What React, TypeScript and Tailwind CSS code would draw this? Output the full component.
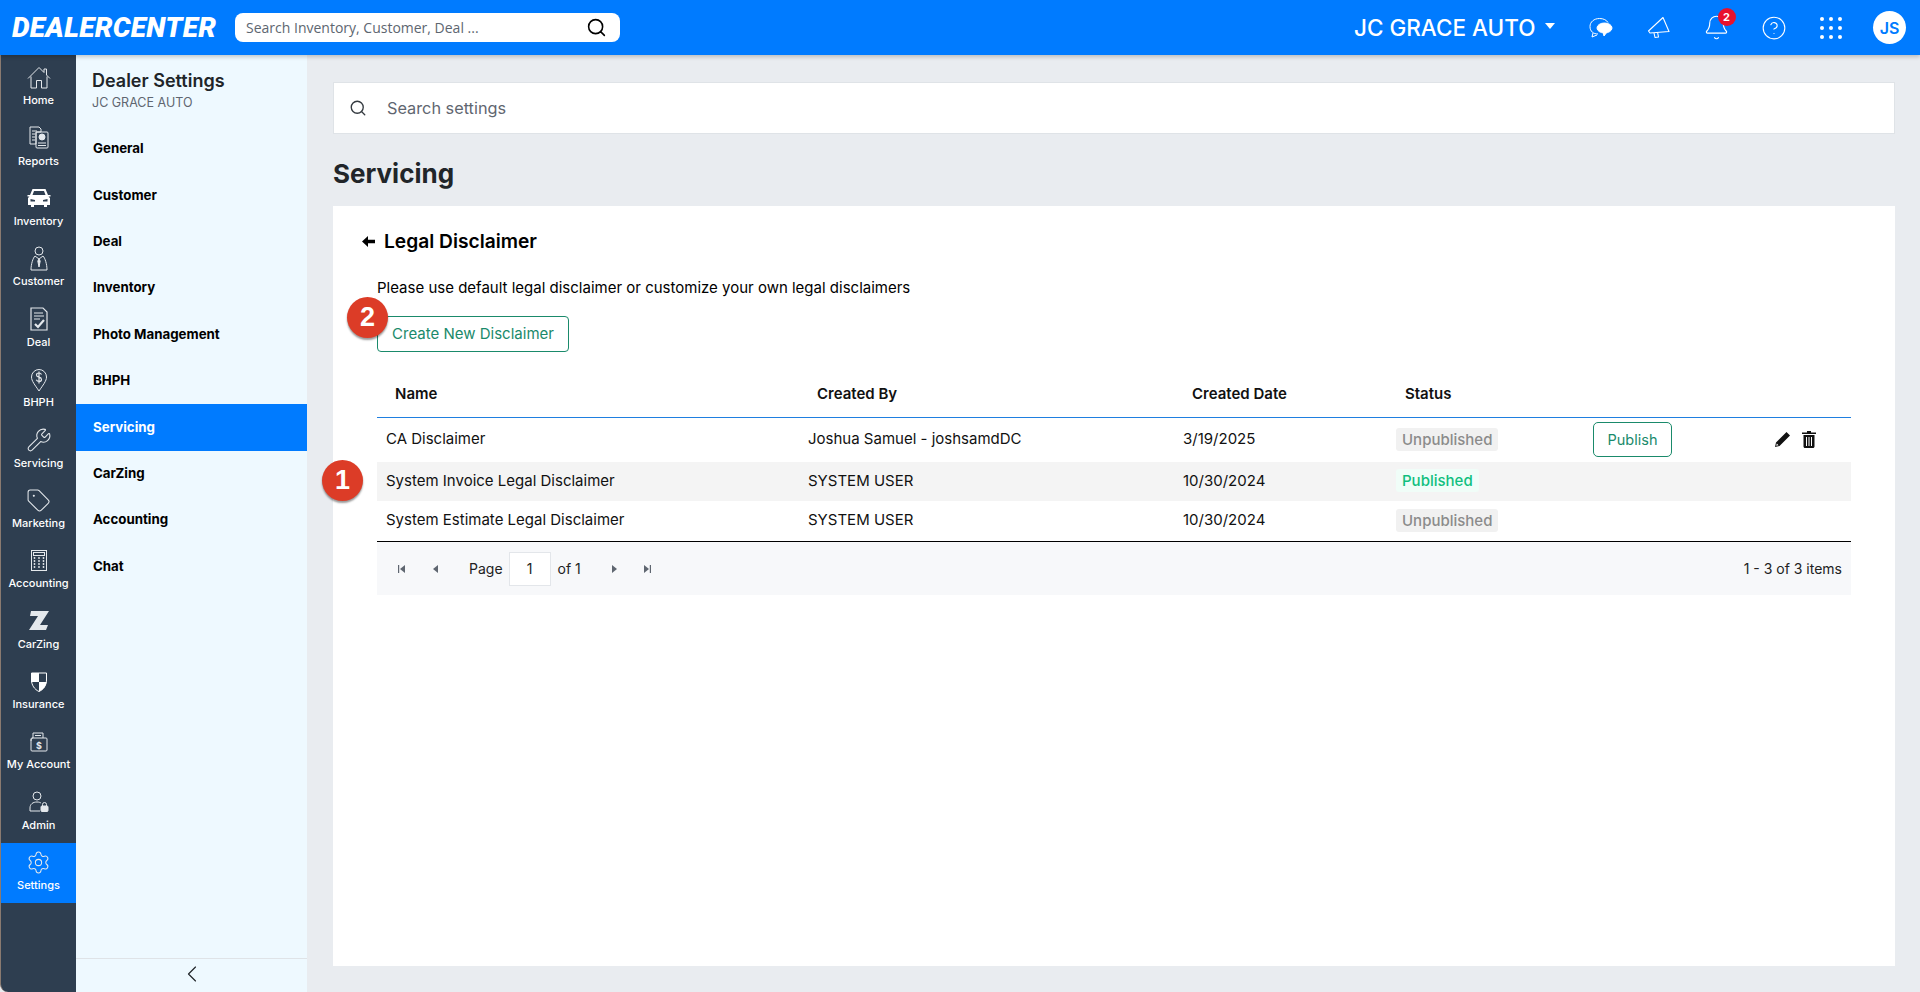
import React from "react";
import { Wrench, Tag, Settings, Bell, CircleHelp, Search, ChevronLeft } from "lucide-react";

const font = "font-['Inter','Liberation_Sans',sans-serif]";

const HomeIcon = () => (
    <svg width="24" height="24" viewBox="0 0 24 24" fill="none" stroke="currentColor" strokeWidth="1">
        <path d="M1 12.500L12 1.500l5 5V3h2.500v6L23 12.500" />
        <path d="M4 10.500V22h5.500v-7.500h5V22H20V10.500" />
    </svg>
);

const ReportsIcon = () => (
    <svg width="22" height="24" viewBox="0 0 22 24" fill="none" stroke="currentColor" strokeWidth="1">
        <path d="M2 1h9l2 2v3H8v12H2z" />
        <path d="M4 5h5M4 8h3M4 11h3M4 14h3" />
        <rect x="8" y="6" width="12" height="16" rx="1" />
        <circle cx="14" cy="11" r="3" fill="currentColor" />
        <path d="M10 17h8M10 19.500h8" />
    </svg>
);

const CarIcon = () => (
    <svg width="24" height="20" viewBox="0 0 24 20" fill="#ffffff">
        <path d="M5.500 1h13l2.500 6h2.500v1.500H21.500L23 10v7h-3v2h-3v-2H7v2H4v-2H1v-7l1.500-1.500H.5V7H3zM7 3L5.500 7h13L17 3zM3.500 11v2.500H8V12zM20.500 11L16 12v1.500h4.500z" fillRule="evenodd" />
    </svg>
);

const CustomerIcon = () => (
    <svg width="20" height="26" viewBox="0 0 20 26" fill="none" stroke="currentColor" strokeWidth="1">
        <circle cx="10" cy="5" r="4" />
        <path d="M6 10c-2 2-4 8-4 14h16c0-6-2-12-4-14l-4 3z" />
        <path d="M10 13l-1.200 2 1.200 6 1.200-6z" fill="currentColor" />
    </svg>
);

const DealIcon = () => (
    <svg width="18" height="24" viewBox="0 0 18 24" fill="none" stroke="currentColor" strokeWidth="1.200">
        <path d="M1 1h12l4 4v18H1z" />
        <path d="M4 6h9M4 9h10M4 12h6" />
        <path d="M5 17l3 3 6-7" strokeWidth="2.200" />
    </svg>
);

const PinIcon = () => (
    <svg width="18" height="24" viewBox="0 0 18 24" fill="none" stroke="currentColor" strokeWidth="1">
        <path d="M9 23C5 17 1.500 13 1.500 9a7.500 7.500 0 0 1 15 0c0 4-3.500 8-7.500 14z" />
        <path d="M11.500 6.500C11 5.500 10 5 9 5c-1.500 0-2.500.8-2.500 2s1 1.800 2.500 2.200 2.500 1 2.500 2.200-1 2-2.500 2c-1.200 0-2.200-.6-2.700-1.600M9 3.500v12" strokeWidth="1.200" />
    </svg>
);

const CalcIcon = () => (
    <svg width="16" height="21" viewBox="0 0 16 21" fill="none" stroke="currentColor" strokeWidth="1">
        <rect x="0.500" y="0.500" width="15" height="20" />
        <rect x="2.500" y="2.500" width="11" height="3" />
        {[8, 11, 14, 17].flatMap((y) =>
            [3.500, 8, 12.500].map((x) => <circle key={`${x}-${y}`} cx={x} cy={y} r="0.900" fill="currentColor" stroke="none" />)
        )}
    </svg>
);

const ZIcon = () => (
    <svg width="20" height="20" viewBox="0 0 20 20" fill="currentColor">
        <path d="M2 0h18l-9 14h8l-2 5H0l9-14H1z" />
    </svg>
);

const ShieldIcon = () => (
    <svg width="16" height="20" viewBox="0 0 16 20">
        <path d="M0 1h8v9H0z" fill="#ffffff" />
        <path d="M8 10h7.500c-.5 4.500-3.500 8-7.500 9.500z" fill="#ffffff" />
        <path d="M.5 1h15v7c0 5-3 9.500-7.500 11.500C3.500 17.500.5 13 .5 8z" fill="none" stroke="#ffffff" />
    </svg>
);

const AccountIcon = () => (
    <svg width="18" height="20" viewBox="0 0 18 20" fill="none" stroke="currentColor" strokeWidth="1">
        <path d="M3 6V1h10v5M5 3.500h6" />
        <rect x="1" y="6" width="16" height="13" rx="1" />
        <path d="M1 9c0-2 1-3 2-3" />
        <text x="9" y="16.500" fontSize="9" fontWeight="700" fill="currentColor" stroke="none" textAnchor="middle">$</text>
    </svg>
);

const AdminIcon = () => (
    <svg width="20" height="22" viewBox="0 0 20 22" fill="none" stroke="currentColor" strokeWidth="1">
        <circle cx="8" cy="5" r="4" />
        <path d="M1 20v-3c0-4 3-6 7-6 2 0 3 .5 4 1M1 20h10" />
        <rect x="12" y="15" width="7" height="5.500" rx="1" fill="currentColor" />
        <path d="M13.500 15v-1.500a2 2 0 0 1 4 0V15" />
    </svg>
);

const ChatIcon = () => (
    <svg width="24" height="22" viewBox="0 0 24 22" fill="none" stroke="#ffffff" strokeWidth="1">
        <path d="M9 17c-4.500 0-8-2.500-8-7.500C1 5 5 1.500 10.500 1.500c4 0 7 1.500 8.500 4" />
        <path d="M4 16l-1 4 5-2" />
        <ellipse cx="15.500" cy="11" rx="7.500" ry="5" fill="#ffffff" />
        <path d="M14 15l1 4 3-4" fill="#ffffff" />
    </svg>
);

const MegaphoneIcon = () => (
    <svg width="24" height="24" viewBox="0 0 24 24" fill="none" stroke="#ffffff" strokeWidth="1.100" strokeLinejoin="round">
        <path d="M16 1.500L1.500 15l1.500 2 19-1.500z" />
        <path d="M7 17l1 4.500 3.500-.5-1-5" />
    </svg>
);

const GridIcon = () => (
    <svg width="22" height="22" viewBox="0 0 22 22" fill="#ffffff">
        {[2, 11, 20].flatMap((y) => [2, 11, 20].map((x) => <circle key={`${x}-${y}`} cx={x} cy={y} r="2" />))}
    </svg>
);

const BackArrow = () => (
    <svg width="13" height="11" viewBox="0 0 13 11" fill="#000000">
        <path d="M0 5.500L6 0v3.800h7v3.400H6V11z" />
    </svg>
);

const SolidPencil = () => (
    <svg width="17" height="17" viewBox="0 0 17 17" fill="#111111">
        <path d="M12.500 1l3.500 3.500L5.500 15 1 16l1-4.500zM2.800 12.500l-.6 2.300 2.300-.6z" fillRule="evenodd" />
    </svg>
);

const SolidTrash = () => (
    <svg width="14" height="17" viewBox="0 0 14 17" fill="#111111">
        <path d="M5 0h4v1.500h5V3H0V1.500h5z" />
        <path d="M1.500 4h11v11.500c0 .8-.7 1.500-1.500 1.500H3c-.8 0-1.500-.7-1.500-1.500zM4 6v9h1V6zM6.500 6v9h1V6zM9 6v9h1V6z" fillRule="evenodd" />
    </svg>
);

const railItems: { label: string; icon: React.ReactNode }[] = [
    { label: "Home", icon: <HomeIcon /> },
    { label: "Reports", icon: <ReportsIcon /> },
    { label: "Inventory", icon: <CarIcon /> },
    { label: "Customer", icon: <CustomerIcon /> },
    { label: "Deal", icon: <DealIcon /> },
    { label: "BHPH", icon: <PinIcon /> },
    { label: "Servicing", icon: <Wrench size={26} strokeWidth={1} /> },
    { label: "Marketing", icon: <Tag size={25} strokeWidth={1} /> },
    { label: "Accounting", icon: <CalcIcon /> },
    { label: "CarZing", icon: <ZIcon /> },
    { label: "Insurance", icon: <ShieldIcon /> },
    { label: "My Account", icon: <AccountIcon /> },
    { label: "Admin", icon: <AdminIcon /> },
    { label: "Settings", icon: <Settings size={25} strokeWidth={1} /> },
];

const panelItems = ["General", "Customer", "Deal", "Inventory", "Photo Management", "BHPH", "Servicing", "CarZing", "Accounting", "Chat"];

const rows = [
    { name: "CA Disclaimer", by: "Joshua Samuel - joshsamdDC", date: "3/19/2025", published: false, h: "h-[44px]", canPublish: true },
    { name: "System Invoice Legal Disclaimer", by: "SYSTEM USER", date: "10/30/2024", published: true, h: "h-[39px] bg-[#f4f4f4]", canPublish: false },
    { name: "System Estimate Legal Disclaimer", by: "SYSTEM USER", date: "10/30/2024", published: false, h: "h-[40px]", canPublish: false },
];

const PagerArrow = ({ dir, bar }: { dir: "l" | "r"; bar?: boolean }) => (
    <svg width="10" height="10" viewBox="0 0 10 10" fill="#5f6670">
        {dir === "l" ? <path d="M8 1v8L3 5z" /> : <path d="M2 1v8l5-4z" />}
        {bar && (dir === "l" ? <rect x="1" y="1" width="1.200" height="8" /> : <rect x="7.800" y="1" width="1.200" height="8" />)}
    </svg>
);

const markerClass = "absolute w-[41px] h-[41px] rounded-full bg-[#dc3c27] text-white text-[27px] font-bold flex items-center justify-center shadow-[0_2px_2px_rgba(0,0,0,0.4)] font-['Liberation_Sans',sans-serif] z-10";

const App: React.FC = () => {
    return (
        <div className={`${font} h-[992px] w-[1920px] overflow-hidden bg-[#e9ecf0] flex flex-col`}>
            <header className="h-[55px] shrink-0 bg-[#007bff] flex items-center shadow-[0_2px_4px_rgba(0,0,0,0.2)] z-10 relative">
                <div className="ml-[12px] w-[223px] text-white italic font-black text-[28px] tracking-[0.3px] font-['Roboto',sans-serif]">DEALERCENTER</div>
                <div className="w-[385px] h-[29px] bg-white rounded-lg flex items-center justify-between pl-[11px] pr-[13px]">
                    <span className="text-[14px] text-[#5d6670] font-['Open_Sans',sans-serif]">Search Inventory, Customer, Deal ...</span>
                    <Search size={21} strokeWidth={1.800} className="text-black" />
                </div>
                <div className="ml-auto flex items-center text-white">
                    <span className="text-[22.500px] font-medium">JC GRACE AUTO</span>
                    <svg width="10" height="6" viewBox="0 0 10 6" fill="#ffffff" className="ml-[9px] mb-[3px] mr-[18px]"><path d="M0 0h10L5 6z" /></svg>
                    <div className="w-[57.500px] flex justify-center"><ChatIcon /></div>
                    <div className="w-[57.500px] flex justify-center"><MegaphoneIcon /></div>
                    <div className="w-[57.500px] flex justify-center relative">
                        <Bell size={27} strokeWidth={1} />
                        <span className="absolute left-[30px] -top-[6px] w-[18px] h-[18px] rounded-full bg-[#e8112d] text-[11px] font-bold flex items-center justify-center">2</span>
                    </div>
                    <div className="w-[57.500px] flex justify-center"><CircleHelp size={26} strokeWidth={1} /></div>
                    <div className="w-[57.500px] flex justify-center"><GridIcon /></div>
                    <div className="w-[33px] h-[33px] mr-[14px] ml-[13px] rounded-full bg-white text-[#007bff] text-[16px] font-semibold flex items-center justify-center">JS</div>
                </div>
            </header>

            <div className="flex flex-1 min-h-0">
                <nav className="w-[76px] shrink-0 border-l border-l-[#8a7a70] bg-[#2e3e50] rounded-bl-lg pt-[3px]">
                    {railItems.map((item) => (
                        <div
                            key={item.label}
                            className={`h-[60.400px] pb-[4px] flex flex-col items-center justify-center gap-[3px] text-white ${item.label === "Settings" ? "bg-[#007bff]" : ""}`}
                        >
                            <div className="h-[25px] flex items-center justify-center text-[#e4e8ec]">{item.icon}</div>
                            <span className="text-[11px] font-medium whitespace-nowrap leading-[14px]">{item.label}</span>
                        </div>
                    ))}
                </nav>

                <aside className="w-[231px] shrink-0 bg-[#eef9ff] flex flex-col">
                    <div className="pl-[16px] pt-[16px] h-[71px]">
                        <div className="text-[18px] font-semibold text-[#212529] leading-[20px]">Dealer Settings</div>
                        <div className="text-[12.500px] text-[#5f6670] leading-[16px] mt-[4px]">JC GRACE AUTO</div>
                    </div>
                    <div className="flex-1">
                        {panelItems.map((item) => (
                            <div
                                key={item}
                                className={`h-[46.400px] pl-[17px] flex items-center text-[13.300px] font-bold ${item === "Servicing" ? "bg-[#007bff] text-white" : "text-black"}`}
                            >
                                {item}
                            </div>
                        ))}
                    </div>
                    <div className="h-[34px] pb-[4px] border-t border-t-[#dfe3e7] flex items-center justify-center text-[#212529]">
                        <ChevronLeft size={28} strokeWidth={1} />
                    </div>
                </aside>

                <main className="flex-1 min-w-0 pl-[26px] pr-[25px] pt-[27px]">
                    <div className="h-[52px] bg-white border border-[#dfe3e7] flex items-center pl-[15px]">
                        <Search size={18} strokeWidth={1.800} className="text-[#343a40]" />
                        <span className="ml-[20px] text-[16.300px] text-[#5f6670]">Search settings</span>
                    </div>
                    <h1 className="mt-[24px] text-[26px] font-bold text-[#212529] leading-[32px]">Servicing</h1>
                    <section className="mt-[16px] h-[760px] bg-white pl-[44px] pr-[44px] pt-[24px] relative">
                        <div className="flex items-center h-[22px]">
                            <span className="ml-[-15px]"><BackArrow /></span>
                            <span className="ml-[9px] text-[19.200px] font-semibold text-black">Legal Disclaimer</span>
                        </div>
                        <p className="mt-[26px] text-[15px] text-black leading-[20px]">Please use default legal disclaimer or customize your own legal disclaimers</p>
                        <div className="relative mt-[18px] w-fit">
                            <span className={`${markerClass} left-[-30px] top-[-19px]`}>2</span>
                            <button className="h-[36px] w-[192px] border border-[#1a8a6b] rounded-[4px] text-[15px] text-[#1a8a6b]">Create New Disclaimer</button>
                        </div>

                        <div className="mt-[20px] relative">
                            <span className={`${markerClass} left-[-55px] top-[88px]`}>1</span>
                            <div className="grid grid-cols-[422px_375px_213px_1fr] h-[46px] items-center border-b border-b-[#1f7fe0] text-[15px] font-semibold text-[#111]">
                                <span className="pl-[18px]">Name</span>
                                <span className="pl-[18px]">Created By</span>
                                <span className="pl-[18px]">Created Date</span>
                                <span className="pl-[18px]">Status</span>
                            </div>
                            {rows.map((row) => (
                                <div key={row.name} className={`grid grid-cols-[422px_375px_213px_206px_145px_1fr] pb-[1px] items-center text-[15px] text-[#111] ${row.h}`}>
                                    <span className="pl-[9px]">{row.name}</span>
                                    <span className="pl-[9px]">{row.by}</span>
                                    <span className="pl-[9px]">{row.date}</span>
                                    <span className="pl-[9px]">
                                        <span className={`inline-block px-[6px] h-[23px] leading-[23px] rounded-[3px] text-[15px] font-medium ${row.published ? "bg-[#f0fdf8] text-[#10bf7f]" : "bg-[#f1f1f1] text-[#8b8b8b]"}`}>
                                            {row.published ? "Published" : "Unpublished"}
                                        </span>
                                    </span>
                                    {row.canPublish ? (
                                        <>
                                            <span className="flex"><button className="h-[35px] w-[79px] border border-[#1a8a6b] rounded-[5px] text-[14.500px] text-[#1a8a6b]">Publish</button></span>
                                            <span className="flex items-center gap-[11px] pl-[36px]">
                                                <SolidPencil />
                                                <SolidTrash />
                                            </span>
                                        </>
                                    ) : null}
                                </div>
                            ))}
                            <div className="h-[54px] border-t border-t-black bg-[#f7f8fa] flex items-center text-[14px] text-[#222] pl-[20px] pr-[9px]">
                                <PagerArrow dir="l" bar />
                                <span className="ml-[23px]"><PagerArrow dir="l" /></span>
                                <span className="ml-[29px]">Page</span>
                                <span className="ml-[6px] w-[42px] h-[34px] bg-white border border-[#e3e6ea] flex items-center justify-center">1</span>
                                <span className="ml-[7px]">of 1</span>
                                <span className="ml-[29px]"><PagerArrow dir="r" /></span>
                                <span className="ml-[22px]"><PagerArrow dir="r" bar /></span>
                                <span className="ml-auto">1 - 3 of 3 items</span>
                            </div>
                        </div>
                    </section>
                </main>
            </div>
        </div>
    );
};

export default App;
